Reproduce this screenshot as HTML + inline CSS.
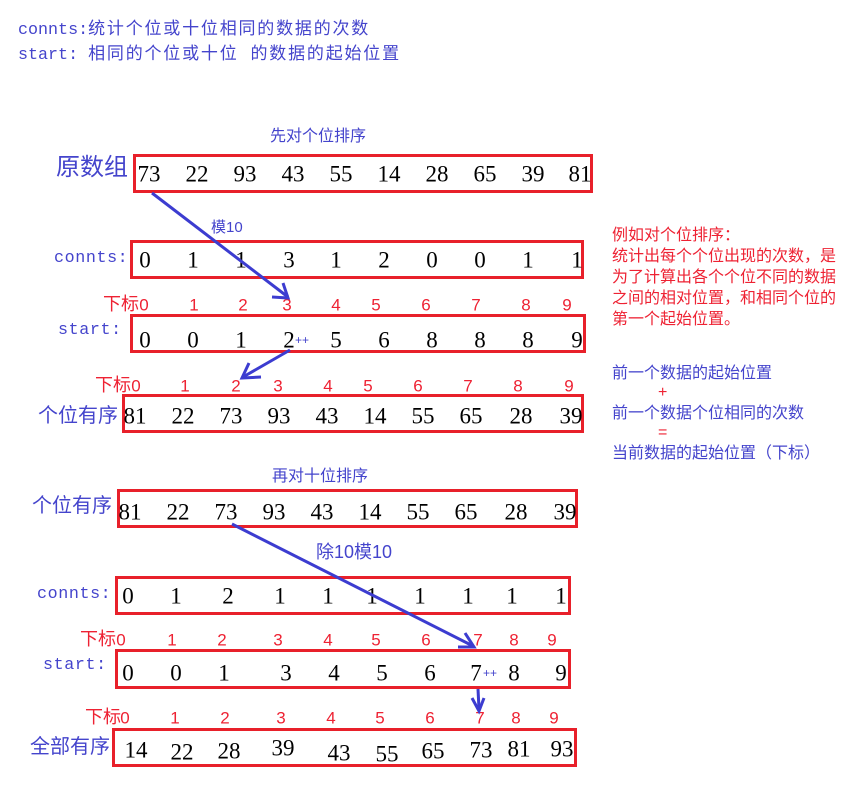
<!DOCTYPE html>
<html><head><meta charset="utf-8"><style>
body{margin:0;width:849px;height:790px;background:#fff;position:relative;overflow:hidden}
.t{position:absolute;white-space:nowrap;line-height:1}
.b{color:#4444cc;font-family:"Liberation Sans","Noto Sans CJK SC",sans-serif}
.m{color:#4444cc;font-family:"Liberation Mono","Noto Sans CJK SC",monospace;font-size:16.7px}
.m .c{letter-spacing:1.8px;font-size:17px}
.r{color:#ee2233;font-family:"Liberation Sans","Noto Sans CJK SC",sans-serif}
.box{position:absolute;border:3px solid #e8202a;box-sizing:border-box}
.n{position:absolute;font-family:"Liberation Serif",serif;font-size:23px;color:#000;transform:translate(-50%,-50%);line-height:1}
.i{position:absolute;font-family:"Liberation Sans",sans-serif;font-size:17px;color:#ee2233;transform:translate(-50%,-50%);line-height:1}
.p{position:absolute;font-size:12px;color:#4444cc;font-family:"Liberation Sans",sans-serif;line-height:1}
</style></head><body>
<div class="t m" style="left:18px;top:22px">connts:<span class="c">统计个位或十位相同的数据的次数</span></div>
<div class="t m" style="left:18px;top:47px">start: <span class="c">相同的个位或十位 的数据的起始位置</span></div>

<div class="t b" style="left:270px;top:129px;font-size:16px">先对个位排序</div>
<div class="t b" style="left:56px;top:156px;font-size:24px">原数组</div>
<div class="box" style="left:133px;top:154px;width:460px;height:39px"></div>
<span class="n" style="left:149px;top:174px">73</span><span class="n" style="left:197px;top:174px">22</span><span class="n" style="left:245px;top:174px">93</span><span class="n" style="left:293px;top:174px">43</span><span class="n" style="left:341px;top:174px">55</span><span class="n" style="left:389px;top:174px">14</span><span class="n" style="left:437px;top:174px">28</span><span class="n" style="left:485px;top:174px">65</span><span class="n" style="left:533px;top:174px">39</span><span class="n" style="left:580px;top:174px">81</span>

<div class="t b" style="left:211px;top:220px;font-size:15px">模10</div>
<div class="t m" style="left:54px;top:251px;letter-spacing:0.6px">connts:</div>
<div class="box" style="left:130px;top:240px;width:454px;height:39px"></div>
<span class="n" style="left:145px;top:260px">0</span><span class="n" style="left:193px;top:260px">1</span><span class="n" style="left:241px;top:260px">1</span><span class="n" style="left:289px;top:260px">3</span><span class="n" style="left:336px;top:260px">1</span><span class="n" style="left:384px;top:260px">2</span><span class="n" style="left:432px;top:260px">0</span><span class="n" style="left:480px;top:260px">0</span><span class="n" style="left:528px;top:260px">1</span><span class="n" style="left:577px;top:260px">1</span>

<div class="t r" style="left:103px;top:295px;font-size:18px">下标</div>
<span class="i" style="left:144px;top:305px">0</span><span class="i" style="left:194px;top:305px">1</span><span class="i" style="left:243px;top:305px">2</span><span class="i" style="left:287px;top:305px">3</span><span class="i" style="left:336px;top:305px">4</span><span class="i" style="left:376px;top:305px">5</span><span class="i" style="left:426px;top:305px">6</span><span class="i" style="left:476px;top:305px">7</span><span class="i" style="left:526px;top:305px">8</span><span class="i" style="left:567px;top:305px">9</span>

<div class="t m" style="left:58px;top:323px;letter-spacing:0.6px">start:</div>
<div class="box" style="left:130px;top:314px;width:456px;height:39px"></div>
<span class="n" style="left:145px;top:340px">0</span><span class="n" style="left:193px;top:340px">0</span><span class="n" style="left:241px;top:340px">1</span><span class="n" style="left:289px;top:340px">2</span><span class="n" style="left:336px;top:340px">5</span><span class="n" style="left:384px;top:340px">6</span><span class="n" style="left:432px;top:340px">8</span><span class="n" style="left:480px;top:340px">8</span><span class="n" style="left:528px;top:340px">8</span><span class="n" style="left:577px;top:340px">9</span>
<span class="p" style="left:295px;top:334px">++</span>

<div class="t r" style="left:95px;top:376px;font-size:18px">下标</div>
<span class="i" style="left:136px;top:386px">0</span><span class="i" style="left:185px;top:386px">1</span><span class="i" style="left:236px;top:386px">2</span><span class="i" style="left:278px;top:386px">3</span><span class="i" style="left:328px;top:386px">4</span><span class="i" style="left:368px;top:386px">5</span><span class="i" style="left:418px;top:386px">6</span><span class="i" style="left:468px;top:386px">7</span><span class="i" style="left:518px;top:386px">8</span><span class="i" style="left:569px;top:386px">9</span>

<div class="t b" style="left:38px;top:406px;font-size:20px">个位有序</div>
<div class="box" style="left:122px;top:394px;width:462px;height:39px"></div>
<span class="n" style="left:135px;top:416px">81</span><span class="n" style="left:183px;top:416px">22</span><span class="n" style="left:231px;top:416px">73</span><span class="n" style="left:279px;top:416px">93</span><span class="n" style="left:327px;top:416px">43</span><span class="n" style="left:375px;top:416px">14</span><span class="n" style="left:423px;top:416px">55</span><span class="n" style="left:471px;top:416px">65</span><span class="n" style="left:521px;top:416px">28</span><span class="n" style="left:571px;top:416px">39</span>

<div class="t r" style="left:612px;top:225px;font-size:16px;line-height:21px">例如对个位排序：<br>统计出每个个位出现的次数，是<br>为了计算出各个个位不同的数据<br>之间的相对位置，和相同个位的<br>第一个起始位置。</div>
<div class="t b" style="left:612px;top:366px;font-size:16px">前一个数据的起始位置</div>
<div class="t r" style="left:658px;top:385px;font-size:16px">+</div>
<div class="t b" style="left:612px;top:406px;font-size:16px">前一个数据个位相同的次数</div>
<div class="t r" style="left:658px;top:425px;font-size:16px">=</div>
<div class="t b" style="left:612px;top:446px;font-size:16px">当前数据的起始位置（下标）</div>

<div class="t b" style="left:272px;top:469px;font-size:16px">再对十位排序</div>
<div class="t b" style="left:32px;top:496px;font-size:20px">个位有序</div>
<div class="box" style="left:117px;top:489px;width:461px;height:39px"></div>
<span class="n" style="left:130px;top:512px">81</span><span class="n" style="left:178px;top:512px">22</span><span class="n" style="left:226px;top:512px">73</span><span class="n" style="left:274px;top:512px">93</span><span class="n" style="left:322px;top:512px">43</span><span class="n" style="left:370px;top:512px">14</span><span class="n" style="left:418px;top:512px">55</span><span class="n" style="left:466px;top:512px">65</span><span class="n" style="left:516px;top:512px">28</span><span class="n" style="left:565px;top:512px">39</span>

<div class="t b" style="left:316px;top:543px;font-size:18px">除10模10</div>
<div class="t m" style="left:37px;top:587px;letter-spacing:0.6px">connts:</div>
<div class="box" style="left:115px;top:576px;width:456px;height:39px"></div>
<span class="n" style="left:128px;top:596px">0</span><span class="n" style="left:176px;top:596px">1</span><span class="n" style="left:228px;top:596px">2</span><span class="n" style="left:280px;top:596px">1</span><span class="n" style="left:328px;top:596px">1</span><span class="n" style="left:372px;top:596px">1</span><span class="n" style="left:420px;top:596px">1</span><span class="n" style="left:468px;top:596px">1</span><span class="n" style="left:512px;top:596px">1</span><span class="n" style="left:561px;top:596px">1</span>

<div class="t r" style="left:80px;top:630px;font-size:18px">下标</div>
<span class="i" style="left:121px;top:640px">0</span><span class="i" style="left:172px;top:640px">1</span><span class="i" style="left:222px;top:640px">2</span><span class="i" style="left:278px;top:640px">3</span><span class="i" style="left:328px;top:640px">4</span><span class="i" style="left:376px;top:640px">5</span><span class="i" style="left:426px;top:640px">6</span><span class="i" style="left:478px;top:640px">7</span><span class="i" style="left:514px;top:640px">8</span><span class="i" style="left:552px;top:640px">9</span>

<div class="t m" style="left:43px;top:658px;letter-spacing:0.6px">start:</div>
<div class="box" style="left:115px;top:649px;width:456px;height:40px"></div>
<span class="n" style="left:128px;top:673px">0</span><span class="n" style="left:176px;top:673px">0</span><span class="n" style="left:224px;top:673px">1</span><span class="n" style="left:286px;top:673px">3</span><span class="n" style="left:334px;top:673px">4</span><span class="n" style="left:382px;top:673px">5</span><span class="n" style="left:430px;top:673px">6</span><span class="n" style="left:476px;top:673px">7</span><span class="n" style="left:514px;top:673px">8</span><span class="n" style="left:561px;top:673px">9</span>
<span class="p" style="left:483px;top:667px">++</span>

<div class="t r" style="left:85px;top:708px;font-size:18px">下标</div>
<span class="i" style="left:125px;top:718px">0</span><span class="i" style="left:175px;top:718px">1</span><span class="i" style="left:225px;top:718px">2</span><span class="i" style="left:281px;top:718px">3</span><span class="i" style="left:331px;top:718px">4</span><span class="i" style="left:380px;top:718px">5</span><span class="i" style="left:430px;top:718px">6</span><span class="i" style="left:480px;top:718px">7</span><span class="i" style="left:516px;top:718px">8</span><span class="i" style="left:554px;top:718px">9</span>

<div class="t b" style="left:30px;top:737px;font-size:20px">全部有序</div>
<div class="box" style="left:112px;top:728px;width:465px;height:39px"></div>
<span class="n" style="left:136px;top:750px">14</span><span class="n" style="left:182px;top:752px">22</span><span class="n" style="left:229px;top:751px">28</span><span class="n" style="left:283px;top:748px">39</span><span class="n" style="left:339px;top:753px">43</span><span class="n" style="left:387px;top:754px">55</span><span class="n" style="left:433px;top:751px">65</span><span class="n" style="left:481px;top:750px">73</span><span class="n" style="left:519px;top:749px">81</span><span class="n" style="left:562px;top:749px">93</span>

<svg width="849" height="790" style="position:absolute;left:0;top:0" fill="none" stroke="#3c3cd0" stroke-width="3">
<line x1="152" y1="193" x2="288" y2="297"/>
<polyline points="283,283 288,298 272,297"/>
<line x1="290" y1="350" x2="243" y2="377"/>
<polyline points="249,363 242,378 261,377"/>
<line x1="232" y1="524" x2="473" y2="646"/>
<polyline points="465,633 474,647 458,647"/>
<line x1="478" y1="689" x2="479" y2="709"/>
<polyline points="472,698 479,711 484,698"/>
</svg>
</body></html>
